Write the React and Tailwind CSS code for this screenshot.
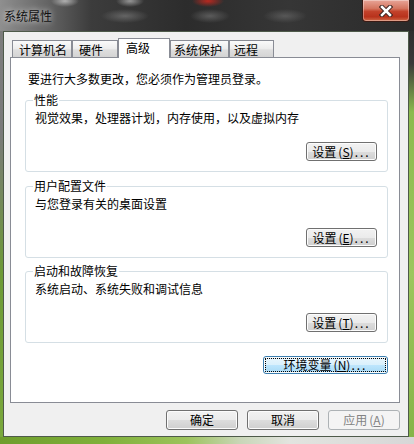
import React from "react";

const buttonStyles = {
  normal:
    "border-[#707070] bg-[linear-gradient(#f2f2f2_0%,#ebebeb_50%,#dddddd_50%,#cfcfcf_100%)] text-black shadow-[inset_0_0_0_1px_#fcfcfc]",
  focused:
    "border-[#3c7fb1] bg-[linear-gradient(#eaf6fd_0%,#d9f0fc_50%,#bee6fd_50%,#a7d9f5_100%)] text-black shadow-[inset_0_0_0_1px_#fcfcfc] [outline:1px_dotted_#000] [outline-offset:-3px]",
  disabled: "border-[#adb2b5] bg-[#f4f4f4] text-[#838383]",
};

function WinButton({ variant = "normal", className = "", children }) {
  return (
    <button
      className={`flex items-center justify-center rounded-[3px] border text-[12px] leading-none ${buttonStyles[variant]} ${className}`}
    >
      {children}
    </button>
  );
}

// label + mnemonic key, e.g. 设置(S)...
const Mnemonic = ({ label, k, dots = true }) => (
  <span className="flex items-center">
    {label}
    <span className="ml-[2px]">
      (<u className="underline-offset-1">{k}</u>)
    </span>
    {dots && <span className="ml-[1px] tracking-[2px]">...</span>}
  </span>
);

const tabs = [
  { name: "计算机名", w: "w-[60px]", pl: "pl-[6px]" },
  { name: "硬件", w: "w-[46px]", pl: "pl-[6px]" },
  { name: "高级", w: "w-[52px]", pl: "pl-[7px]", active: true },
  { name: "系统保护", w: "w-[59px]", pl: "pl-[3px]" },
  { name: "远程", w: "w-[45px]", pl: "pl-[4px]" },
];

const groups = [
  { title: "性能", desc: "视觉效果，处理器计划，内存使用，以及虚拟内存", key: "S", gap: "" },
  { title: "用户配置文件", desc: "与您登录有关的桌面设置", key: "E", gap: "mt-[6px]" },
  { title: "启动和故障恢复", desc: "系统启动、系统失败和调试信息", key: "T", gap: "mt-[5px]" },
];

function CloseButton() {
  return (
    <div className="flex h-[22px] w-[48px] items-center justify-center rounded-b-[4px] border border-t-0 border-[#3a1a14] bg-[linear-gradient(#e8a598_0%,#d47560_40%,#c2412a_55%,#b8321c_80%,#cf6a48_100%)] shadow-[inset_0_0_0_1px_rgba(255,255,255,0.35)]">
      <svg width="14" height="12" viewBox="0 0 14 12">
        <path d="M3 2 L11 10 M11 2 L3 10" stroke="#3b2320" strokeWidth="4.5" strokeLinecap="square" />
        <path d="M3 2 L11 10 M11 2 L3 10" stroke="#ffffff" strokeWidth="2.5" strokeLinecap="square" />
      </svg>
    </div>
  );
}

export default function App() {
  return (
    <div className="flex h-[444px] w-[414px] flex-col overflow-hidden bg-[linear-gradient(#3a3a3a_0px,#3a3a3a_60px,#7fae3f_150px,#88b84a_100%)] font-['Noto_Sans_CJK_SC',sans-serif] text-[12px] text-black">
      {/* title bar */}
      <div className="flex h-[31px] shrink-0 items-start justify-between bg-[radial-gradient(ellipse_14px_6px_at_65px_1px,rgba(200,200,200,0.8),transparent),radial-gradient(ellipse_14px_6px_at_130px_1px,rgba(190,190,190,0.7),transparent),radial-gradient(ellipse_16px_6px_at_208px_1px,rgba(200,40,30,0.9),transparent),radial-gradient(ellipse_24px_7px_at_125px_16px,rgba(120,120,120,0.7),transparent),radial-gradient(ellipse_20px_7px_at_210px_16px,rgba(110,110,110,0.7),transparent),radial-gradient(ellipse_22px_7px_at_285px_16px,rgba(110,110,110,0.6),transparent),linear-gradient(to_right,#8f8f8f_0%,#6a6a6a_10%,#3c3c3c_22%,#2c2c2c_45%,#363636_70%,#2a2a2a_100%)]">
        <span className="ml-[4px] mt-[8px] leading-[16px] text-[#111] [text-shadow:0_0_6px_rgba(255,255,255,0.9)]">
          系统属性
        </span>
        <div className="mr-[4px]">
          <CloseButton />
        </div>
      </div>

      <div className="flex h-[406px] shrink-0">
        {/* left frame */}
        <div className="w-[3px] bg-[linear-gradient(#7d7d7d_0%,#7a7a7a_25%,#6d9a36_60%,#7aa83c_100%)]" />

        {/* dialog body */}
        <div className="flex w-[406px] flex-col border border-[#4e5a4a] bg-[#f0f0f0] pl-[6px] pr-[8px]">
          {/* tabs */}
          <div className="relative z-10 -mb-px ml-[2px] flex h-[26px] items-end">
            {tabs.map((t) =>
              t.active ? (
                <div
                  key={t.name}
                  className={`${t.w} ${t.pl} h-[20px] border border-b-0 border-[#898c95] bg-white pt-[1px] leading-[16px]`}
                >
                  {t.name}
                </div>
              ) : (
                <div
                  key={t.name}
                  className={`${t.w} ${t.pl} mb-px h-[17px] border border-b-0 border-[#898c95] bg-[linear-gradient(#fafafa_0%,#ececec_50%,#dedede_55%,#d4d4d4_100%)] pt-[1px] leading-[16px]`}
                >
                  {t.name}
                </div>
              )
            )}
          </div>

          {/* panel */}
          <div className="flex h-[346px] w-[390px] flex-col border border-[#898c95] bg-white pl-[14px] pr-[11px] pt-[13px]">
            <p className="ml-[3px] leading-[16px]">要进行大多数更改，您必须作为管理员登录。</p>

            <div className="mt-[5px] flex flex-col">
              {groups.map((g) => (
                <fieldset
                  key={g.title}
                  className={`${g.gap} w-[363px] rounded-[3px] border border-[#d5dfe5] pb-[10px] pl-[9px] pr-[10px] pt-[2px]`}
                >
                  <legend className="-ml-[2px] px-[1px] leading-[16px]">{g.title}</legend>
                  <p className="leading-[16px]">{g.desc}</p>
                  <div className="mt-[16px] flex justify-end">
                    <WinButton className="h-[19px] w-[71px]">
                      <Mnemonic label="设置" k={g.key} />
                    </WinButton>
                  </div>
                </fieldset>
              ))}
            </div>

            <div className="mt-[13px] flex w-[363px] justify-end">
              <WinButton variant="focused" className="h-[18px] w-[125px]">
                <Mnemonic label="环境变量" k="N" />
              </WinButton>
            </div>
          </div>

          {/* dialog buttons */}
          <div className="mt-[7px] flex justify-end gap-[9px]">
            <WinButton className="h-[20px] w-[72px]">确定</WinButton>
            <WinButton className="h-[20px] w-[72px]">取消</WinButton>
            <WinButton variant="disabled" className="h-[20px] w-[72px]">
              <Mnemonic label="应用" k="A" dots={false} />
            </WinButton>
          </div>
        </div>

        {/* right frame */}
        <div className="flex-1 bg-[linear-gradient(#2e2e2e_0%,#3a3a3a_8%,#8cba4e_20%,#9cc65e_60%,#86b448_100%)]" />
      </div>

      {/* bottom frame */}
      <div className="h-[7px] shrink-0 bg-[linear-gradient(to_right,#6e9d2c_0%,#7fb03a_25%,#9cc35c_45%,#c9d6b8_58%,#e2e4df_70%,#d7d7d7_100%)]" />
    </div>
  );
}
